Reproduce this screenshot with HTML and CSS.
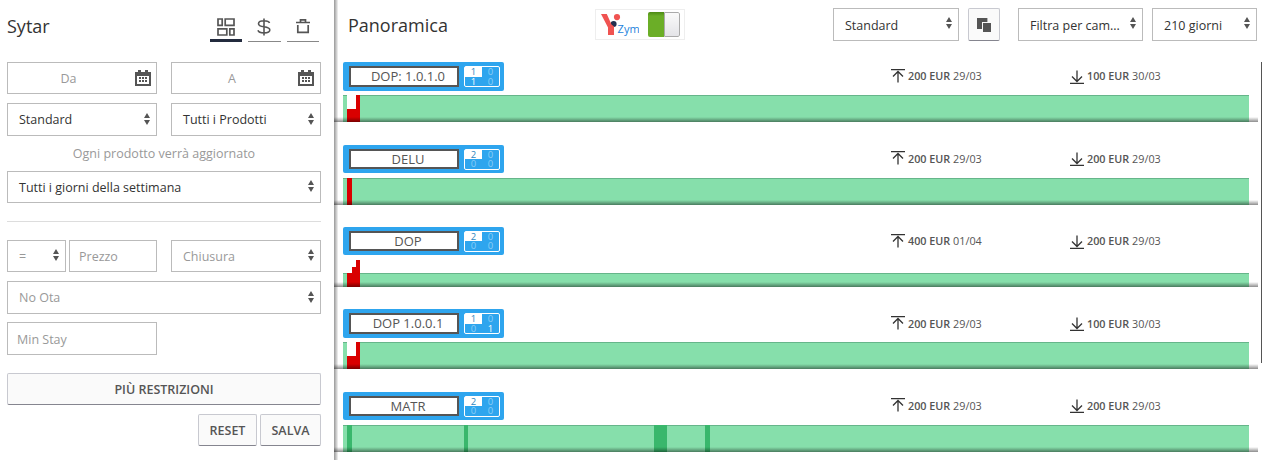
FILE: index.html
```html
<!DOCTYPE html>
<html lang="it">
<head>
<meta charset="utf-8">
<title>Panoramica</title>
<link rel="stylesheet" href="styles.css">
</head>
<body>
<svg class="defs" width="0" height="0">
  <symbol id="sort" viewBox="0 0 6 12"><path d="M3 0L6 5H0zM0 7H6L3 12z"/></symbol>
  <symbol id="cal" viewBox="0 0 16 16"><path fill-rule="evenodd" d="M0 2H3V0H6V2H10V0H13V2H16V16H0zM2 6V14H14V6z"/><path d="M4 7h2v2H4zM7 7h2v2H7zM10 7h2v2h-2zM4 10h2v2H4zM7 10h2v2H7zM10 10h2v2h-2z"/></symbol>
  <symbol id="up" viewBox="0 0 14 14"><path d="M0 .5H14M7 13.5V2.5M2 7.5L7 2.5L12 7.5"/></symbol>
  <symbol id="down" viewBox="0 0 14 14"><path d="M0 13.5H14M7 .5V11.5M2 6.5L7 11.5L12 6.5"/></symbol>
</svg>
<div class="app">
  <aside class="side">
    <header class="side-head">
      <h1 class="title">Sytar</h1>
      <nav class="tabs">
        <a class="tab tab-on"><svg width="18" height="18" viewBox="0 0 18 18" fill="none" stroke="#555" stroke-width="1.7"><path d="M1 1H5.2V7.3H1zM8.2 1H17V7.3H8.2zM1 10.9H9.8V17H1zM12.8 10.9H17V17H12.8z"/></svg></a>
        <a class="tab"><svg width="14" height="18" viewBox="0 0 14 18" fill="none" stroke="#555" stroke-width="1.6"><path d="M12.5 5C12 3.6 10.5 2.8 7 2.8C3.5 2.8 1.5 3.8 1.5 5.7C1.5 7.8 3.5 8.3 7 8.8C10.8 9.3 12.8 10 12.8 12C12.8 14 10.5 14.9 7 14.9C3.5 14.9 1.5 14 1 12.2M7 .5V17.5"/></svg></a>
        <a class="tab"><svg width="14" height="16" viewBox="0 0 14 16" fill="none" stroke="#555" stroke-width="1.7"><path d="M0 4.5H14M4.5 4V1.8H9.5V4M1.8 7V14.4H12.2V7"/></svg></a>
      </nav>
    </header>
    <div class="grid">
      <div class="field center"><span>Da</span><svg class="cal"><use href="#cal"/></svg></div>
      <div class="field center to"><span>A</span><svg class="cal"><use href="#cal"/></svg></div>
      <div class="field select tall dark"><span>Standard</span><svg class="sort"><use href="#sort"/></svg></div>
      <div class="field select tall dark"><span>Tutti i Prodotti</span><svg class="sort"><use href="#sort"/></svg></div>
    </div>
    <p class="note">Ogni prodotto verrà aggiornato</p>
    <div class="field select dark"><span>Tutti i giorni della settimana</span><svg class="sort"><use href="#sort"/></svg></div>
    <hr class="rule">
    <div class="grid">
      <div class="pair">
        <div class="field select op"><span>=</span><svg class="sort"><use href="#sort"/></svg></div>
        <div class="field price"><span>Prezzo</span></div>
      </div>
      <div class="field select"><span>Chiusura</span><svg class="sort"><use href="#sort"/></svg></div>
      <div class="field select tall wide"><span>No Ota</span><svg class="sort"><use href="#sort"/></svg></div>
      <div class="field tall stay"><span>Min Stay</span></div>
    </div>
    <button class="btn more">PIÙ RESTRIZIONI</button>
    <div class="actions"><button class="btn reset">RESET</button><button class="btn save">SALVA</button></div>
  </aside>
  <main class="main">
    <header class="main-head">
      <h2 class="title">Panoramica</h2>
      <div class="zym">
        <svg width="38" height="23" viewBox="0 0 38 23"><circle cx="12.6" cy="10" r="3" fill="#232f4f"/><path fill="#f05351" d="M0 0H5.8L10.5 10.5L13 12.5V21H7V13.5z"/><circle cx="16" cy="3.1" r="3.1" fill="#f05351"/><text x="16.6" y="19" class="zym-text">Zym</text></svg>
        <div class="toggle"><i class="toggle-on"></i><i class="toggle-knob"></i></div>
      </div>
      <div class="field select f-standard"><span>Standard</span><svg class="sort"><use href="#sort"/></svg></div>
      <button class="btn copy"><svg width="14" height="14" viewBox="0 0 14 14" fill="#555"><path d="M0 0H10.4V4H5V11H0z"/><path d="M6 5H14V14H6z"/></svg></button>
      <div class="field select f-filter"><span>Filtra per cam...</span><svg class="sort"><use href="#sort"/></svg></div>
      <div class="field select f-days"><span>210 giorni</span><svg class="sort"><use href="#sort"/></svg></div>
    </header>
    <div class="rows">
      <section class="row">
        <div class="info">
          <div class="tag"><b class="name">DOP: 1.0.1.0</b><div class="counts"><i class="hit">1</i><i>0</i><i class="lit">1</i><i>0</i></div></div>
          <div class="rate max"><svg class="arrow"><use href="#up"/></svg><b>200 EUR</b> 29/03</div>
          <div class="rate min"><svg class="arrow"><use href="#down"/></svg><b>100 EUR</b> 30/03</div>
        </div>
        <svg class="chart" viewBox="0 0 906 27"><path class="green" d="M0 0H906V27H0z"/><path class="edge" d="M0 0H906V1H0z"/><path class="blank" d="M4 0H13V14H4z"/><path class="red" d="M4 14H13V0H17V27H4z"/></svg>
      </section>
      <section class="row">
        <div class="info">
          <div class="tag"><b class="name">DELU</b><div class="counts"><i class="hit">2</i><i>0</i><i>0</i><i>0</i></div></div>
          <div class="rate max"><svg class="arrow"><use href="#up"/></svg><b>200 EUR</b> 29/03</div>
          <div class="rate min"><svg class="arrow"><use href="#down"/></svg><b>200 EUR</b> 29/03</div>
        </div>
        <svg class="chart" viewBox="0 0 906 27"><path class="green" d="M0 0H906V27H0z"/><path class="edge" d="M0 0H906V1H0z"/><path class="red" d="M4 0H9V27H4z"/></svg>
      </section>
      <section class="row">
        <div class="info">
          <div class="tag"><b class="name">DOP</b><div class="counts"><i class="hit">2</i><i>0</i><i>0</i><i>0</i></div></div>
          <div class="rate max"><svg class="arrow"><use href="#up"/></svg><b>400 EUR</b> 01/04</div>
          <div class="rate min"><svg class="arrow"><use href="#down"/></svg><b>200 EUR</b> 29/03</div>
        </div>
        <svg class="chart" viewBox="0 0 906 27"><path class="green" d="M0 13H906V27H0z"/><path class="edge" d="M0 13H906V14H0z"/><path class="red" d="M4 13H9V7H13V0H17V27H4z"/></svg>
      </section>
      <section class="row">
        <div class="info">
          <div class="tag"><b class="name">DOP 1.0.0.1</b><div class="counts"><i class="hit">1</i><i>0</i><i>0</i><i class="lit">1</i></div></div>
          <div class="rate max"><svg class="arrow"><use href="#up"/></svg><b>200 EUR</b> 29/03</div>
          <div class="rate min"><svg class="arrow"><use href="#down"/></svg><b>100 EUR</b> 30/03</div>
        </div>
        <svg class="chart" viewBox="0 0 906 27"><path class="green" d="M0 0H906V27H0z"/><path class="edge" d="M0 0H906V1H0z"/><path class="blank" d="M4 0H13V14H4z"/><path class="red" d="M4 14H13V0H17V27H4z"/></svg>
      </section>
      <section class="row">
        <div class="info">
          <div class="tag"><b class="name">MATR</b><div class="counts"><i class="hit">2</i><i>0</i><i>0</i><i>0</i></div></div>
          <div class="rate max"><svg class="arrow"><use href="#up"/></svg><b>200 EUR</b> 29/03</div>
          <div class="rate min"><svg class="arrow"><use href="#down"/></svg><b>200 EUR</b> 29/03</div>
        </div>
        <svg class="chart" viewBox="0 0 906 27"><path class="green" d="M0 0H906V27H0z"/><path class="edge" d="M0 0H906V1H0z"/><path class="deep" d="M4 0H9V27H4zM121 0H125V27H121zM311 0H324V27H311zM362 0H367V27H362z"/></svg>
      </section>
    </div>
    <i class="scrollbar"></i>
  </main>
</div>
</body>
</html>
```
FILE: styles.css
```css
* { box-sizing: border-box; }
body { margin: 0; background: #fff; font: 12.5px "Open Sans", sans-serif; color: #333; overflow: hidden; }
.defs { position: absolute; }
.app { display: flex; width: 1262px; height: 460px; overflow: hidden; }
i { font-style: normal; }
svg { display: block; flex: none; }

.side { width: 334px; flex: none; padding: 0 13px 0 7px; }
.title { margin: 0; font-size: 18px; font-weight: 400; line-height: 24px; }
.side-head { display: flex; justify-content: space-between; height: 62px; padding-top: 14px; }
.tabs { display: flex; gap: 6px; margin-right: 2px; height: 28px; }
.tab { width: 32.5px; height: 28px; display: flex; justify-content: center; align-items: flex-start; padding-top: 4px; border-bottom: 1px solid #888; }
.tab-on { border-bottom: 3px solid #232b3e; width: 32px; }

.field { display: flex; align-items: center; height: 32px; border: 1px solid #bbb; background: #fff; color: #999; padding: 0 9px; white-space: nowrap; }
.select { justify-content: space-between; padding: 0 6px 0 11px; }
.tall { height: 33px; }
.stay { padding-top: 1px; }
.dark { color: #333; }
.center { justify-content: space-between; padding-right: 5px; }
.to { padding-right: 6px; }
.center span { flex: 1; text-align: center; padding-right: 15px; }
.sort { width: 6px; height: 12px; fill: #555; margin-bottom: 2px; }
.cal { width: 16px; height: 16px; fill: #555; }
.grid { display: grid; grid-template-columns: 150px 150px; column-gap: 14px; row-gap: 9px; }
.note { margin: 0; height: 35px; line-height: 35px; text-align: center; color: #999; }
.rule { margin: 18px 0; border: 0; height: 1px; background: #ddd; }
.pair { display: flex; gap: 3px; }
.op { width: 59px; }
.price { width: 88px; }
.wide { grid-column: 1 / 3; }
.stay { margin-top: -1px; }

.btn { font: 600 12.5px "Open Sans", sans-serif; color: #555; background: #fafafa; border: 1px solid #c8c9d0; border-bottom-color: #85858f; border-radius: 2px; height: 32px; padding: 0; }
.more { display: block; width: 314px; margin-top: 18px; }
.actions { display: flex; justify-content: flex-end; gap: 3px; margin-top: 9px; }
.reset { width: 59px; }
.save { width: 61px; }

.main { position: relative; width: 928px; flex: none; }
.main::before { content: ""; position: absolute; left: 0; top: 0; width: 4px; height: 460px; background: linear-gradient(90deg, #999, #c4c4c4 50%, #f4f4f4); }
.main-head { display: flex; height: 39.8px; padding: 8px 5px 0 14px; }
.main-head .field { height: 33px; color: #333; }
.main-head .field span { padding-top: 2px; }
.main-head .sort { margin-bottom: 4px; }
.main-head .title { width: 247px; margin-top: 5px; }
.zym { width: 90px; height: 31px; margin-top: 1px; border: 1px solid #eee; display: flex; padding: 2px 4px 0 5px; gap: 9px; }
.zym svg { margin-top: 2px; }
.zym-text { font: 11px "Open Sans", sans-serif; fill: #1d83dc; }
.toggle { display: flex; width: 32px; height: 25px; border-radius: 2px; overflow: hidden; }
.toggle-on { width: 16px; background: linear-gradient(#4d8914, #6bae27 4px); }
.toggle-knob { width: 16px; border: 1px solid #aaa; background: linear-gradient(#fafafa, #e4e4e8); border-radius: 0 2px 2px 0; }
.f-standard { width: 126px; margin-left: 148px; }
.copy { width: 32px; height: 33px; margin-left: 9px; display: flex; align-items: center; justify-content: center; }
.f-filter { width: 125px; margin-left: 18px; }
.f-days { width: 105px; margin-left: 9px; }

.row { position: relative; height: 82.4px; padding: 22.4px 0 0 9px; display: flex; flex-direction: column; justify-content: space-between; }
.row::after { content: ""; position: absolute; left: 0; bottom: 0; width: 924px; height: 5px; background: linear-gradient(rgba(0,0,0,0), rgba(0,0,0,.22) 50%, rgba(0,0,0,.45)); }
.info { display: flex; height: 28.4px; }
.tag { width: 161px; display: flex; gap: 5px; padding: 4px 4px 4px 6px; background: #2ea5ee; border-radius: 2px; }
.name { width: 110px; border: 2px solid #555; background: #fff; font-size: 13px; font-weight: 400; color: #555; text-align: center; line-height: 17px; padding-left: 8px; }
.counts { width: 36px; height: 21px; border: 1px solid #fff; border-radius: 2px; display: grid; grid-template-columns: 17px 17px; grid-template-rows: 9.5px 9.5px; font-size: 9.5px; line-height: 10px; text-align: center; color: #8acdf6; }
.counts .hit { background: #fff; color: #2e86be; }
.counts .lit { color: #fff; }
.rate { display: flex; align-items: center; height: 27.4px; font-size: 10.8px; color: #555; white-space: pre; }
.rate b { font-weight: 600; }
.max { margin-left: 387px; width: 179px; }
.arrow { width: 14px; height: 14px; fill: none; stroke: #333; stroke-width: 1.3; margin-right: 3px; }
.min .arrow { margin-top: 2px; }
.chart { width: 906px; height: 27px; shape-rendering: crispEdges; }
.green { fill: #86dfab; }
.edge { fill: #66b58a; }
.blank { fill: #fff; }
.red { fill: #d90000; }
.deep { fill: #39b76c; }
.scrollbar { position: absolute; right: 0; top: 62px; width: 1px; height: 301px; background: #555; }
```
